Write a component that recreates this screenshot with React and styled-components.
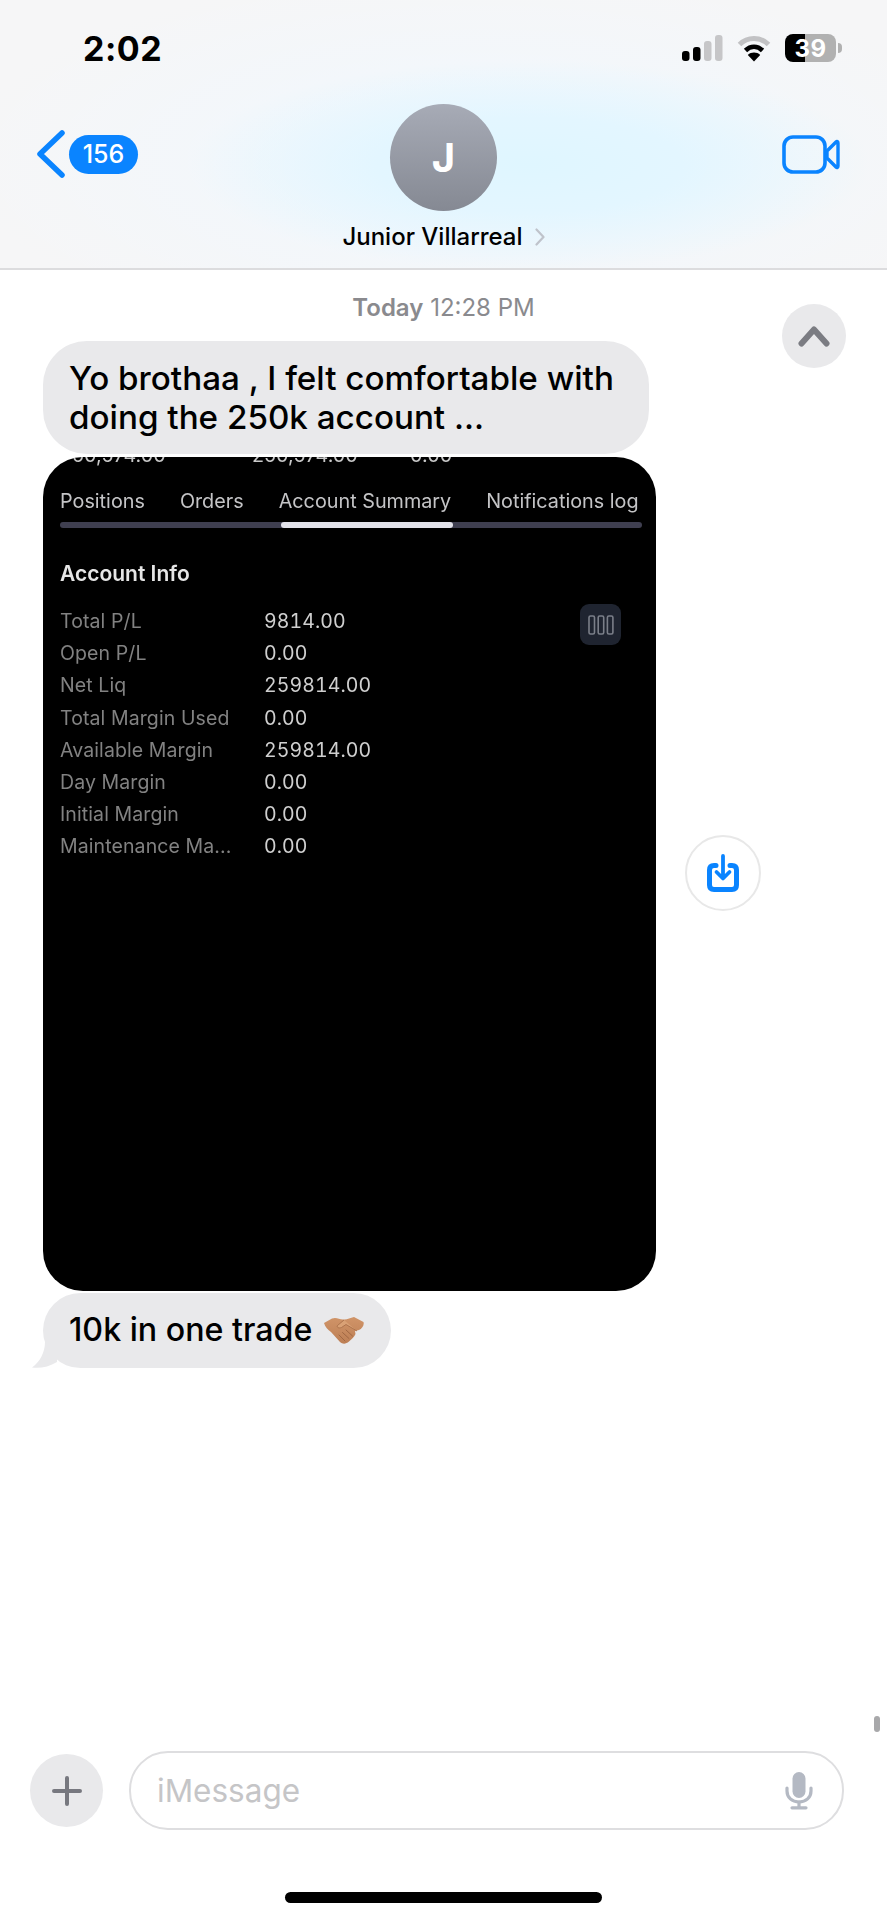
import React from 'react';
import styled, { createGlobalStyle } from 'styled-components';

const GlobalStyle = createGlobalStyle`
  html, body {
    margin: 0;
    padding: 0;
    background: #fff;
  }
  * {
    box-sizing: border-box;
  }
`;

const Page = styled.div`
  position: relative;
  width: 887px;
  height: 1920px;
  overflow: hidden;
  display: flex;
  flex-direction: column;
  background: #fff;
  font-family: Inter, "Liberation Sans", sans-serif;
  color: #000;
`;

const Header = styled.header`
  height: 270px;
  flex: none;
  border-bottom: 2px solid #dcdcde;
  background:
    radial-gradient(ellipse 340px 105px at 530px 165px, #dff6ff 0%, #e3f6ff 45%, rgba(235, 247, 255, 0) 100%),
    radial-gradient(ellipse 520px 190px at 480px 160px, #f0f8ff 0%, rgba(240, 248, 255, 0) 100%),
    #f6f6f7;
`;

const StatusBar = styled.div`
  height: 96px;
  display: flex;
  align-items: center;
  justify-content: space-between;
  padding: 0 51px 0 83px;
`;

const Clock = styled.span`
  font-size: 34px;
  font-weight: 700;
  letter-spacing: 0.5px;
`;

const StatusIcons = styled.div`
  display: flex;
  align-items: center;
  gap: 14px;
`;

const Battery = styled.div`
  position: relative;
  width: 51px;
  height: 28px;
  border-radius: 8px;
  display: flex;
  align-items: center;
  justify-content: center;
  background: linear-gradient(90deg, #000 0, #000 20px, #b1b1b1 20px);
  color: #fff;
  font-size: 24px;
  font-weight: 700;
  letter-spacing: 0.5px;

  &::after {
    content: '';
    position: absolute;
    right: -6px;
    top: 9px;
    width: 4px;
    height: 10px;
    border-radius: 0 4px 4px 0;
    background: #b1b1b1;
  }
`;

const Nav = styled.div`
  display: grid;
  grid-template-columns: 1fr auto 1fr;
  padding: 8px 47px 0;
`;

const BackLink = styled.div`
  display: flex;
  align-items: center;
  gap: 4px;
  height: 100px;
  margin-left: -10px;
`;

const CountBadge = styled.span`
  width: 69px;
  height: 39px;
  border-radius: 20px;
  background: #0a84ff;
  color: #fff;
  font-size: 25px;
  font-weight: 500;
  display: flex;
  align-items: center;
  justify-content: center;
`;

const Contact = styled.div`
  display: flex;
  flex-direction: column;
  align-items: center;
`;

const Avatar = styled.div`
  width: 107px;
  height: 107px;
  border-radius: 50%;
  background: linear-gradient(180deg, #a7abb6 0%, #858993 100%);
  color: #fff;
  font-size: 40px;
  font-weight: 700;
  display: flex;
  align-items: center;
  justify-content: center;
`;

const ContactName = styled.div`
  margin-top: 12px;
  display: flex;
  align-items: center;
  gap: 12px;
  font-size: 24px;
  font-weight: 500;
  line-height: 28px;
`;

const VideoSlot = styled.div`
  display: flex;
  align-items: center;
  justify-content: flex-end;
  height: 100px;
`;

const Thread = styled.main`
  flex: 1;
  padding: 24px 0 0 43px;
`;

const Stamp = styled.div`
  height: 28px;
  margin-left: -43px;
  text-align: center;
  font-size: 24px;
  line-height: 28px;
  color: #8a8a8e;

  b {
    font-weight: 600;
  }
`;

const ScrollUp = styled.div`
  position: absolute;
  left: 782px;
  top: 304px;
  width: 64px;
  height: 64px;
  border-radius: 50%;
  background: #e9e9eb;
  display: flex;
  align-items: center;
  justify-content: center;
`;

const Bubble = styled.div`
  position: relative;
  width: fit-content;
  background: #e9e9eb;
  font-size: ${(p) => p.$size}px;
  font-weight: 500;
  line-height: 38.5px;
  padding: ${(p) => p.$pad};
  border-radius: ${(p) => p.$radius}px;
  margin-top: ${(p) => p.$top}px;
  display: flex;
  align-items: center;
`;

const Tail = styled.svg`
  position: absolute;
  left: -12px;
  bottom: 0;
`;

const AttachmentRow = styled.div`
  display: flex;
  align-items: center;
  margin-top: 3px;
`;

const Shot = styled.div`
  width: 613px;
  height: 834px;
  border-radius: 40px;
  background: #000;
  overflow: hidden;
  padding: 0 17px;
  font-size: 19.8px;
  filter: blur(0.3px);
`;

const CutRow = styled.div`
  display: flex;
  margin: -14px 0 0 12px;
  height: 24px;
  line-height: 24px;
  color: #c9c9c9;
`;

const CutCell = styled.span`
  width: ${(p) => p.$w}px;
`;

const Tabs = styled.div`
  display: flex;
  gap: 35px;
  margin-top: 22px;
  height: 24px;
  line-height: 24px;
  color: #c4c4c6;
  white-space: nowrap;
`;

const Track = styled.div`
  margin-top: 9px;
  height: 6px;
  width: 582px;
  border-radius: 3px;
  background: #3f3f50;
`;

const TrackThumb = styled.div`
  margin-left: 221px;
  width: 172px;
  height: 6px;
  border-radius: 3px;
  background: #e2e2ea;
`;

const InfoTitle = styled.h2`
  margin: 33px 0 0;
  font-size: 21px;
  font-weight: 600;
  line-height: 26px;
  color: #e6e6e6;
`;

const InfoBody = styled.div`
  display: flex;
  justify-content: space-between;
  align-items: flex-start;
  margin-top: 18px;
  padding-right: 18px;
`;

const InfoTable = styled.div`
  display: grid;
  grid-template-columns: 204px auto;
  grid-auto-rows: 32.2px;
  line-height: 32.2px;
`;

const InfoLabel = styled.span`
  color: #828282;
  font-size: 19.5px;
  letter-spacing: 0.1px;
`;

const InfoValue = styled.span`
  color: #cfcfcf;
  font-size: 19.5px;
  letter-spacing: 0.1px;
  font-variant-numeric: tabular-nums;
`;

const ColumnsButton = styled.div`
  width: 41px;
  height: 41px;
  margin-top: -1px;
  border-radius: 9px;
  background: #1f2430;
  display: flex;
  align-items: center;
  justify-content: center;
`;

const SaveButton = styled.div`
  margin: -2px 0 0 29px;
  width: 76px;
  height: 76px;
  border-radius: 50%;
  border: 2px solid #e8e8e8;
  display: flex;
  align-items: center;
  justify-content: center;
`;

const Composer = styled.div`
  display: flex;
  align-items: center;
  gap: 26px;
  padding: 0 43px 0 30px;
`;

const PlusButton = styled.div`
  width: 73px;
  height: 73px;
  border-radius: 50%;
  background: #e9e9eb;
  display: flex;
  align-items: center;
  justify-content: center;
`;

const InputField = styled.div`
  flex: 1;
  height: 79px;
  border-radius: 39px;
  border: 2px solid #dedee0;
  padding: 0 29px 0 26px;
  display: flex;
  align-items: center;
  justify-content: space-between;
  color: #c5c5c7;
  font-size: 31.5px;
`;

const ScrollIndicator = styled.div`
  position: absolute;
  left: 874px;
  top: 1716px;
  width: 6px;
  height: 16px;
  border-radius: 3px;
  background: #a8a8aa;
`;

const HomeBar = styled.div`
  flex: none;
  width: 317px;
  height: 11px;
  margin: 62px auto 17px;
  border-radius: 6px;
  background: #000;
`;

function SignalIcon() {
  return (
    <svg width="41" height="26" viewBox="0 0 41 26">
      <rect x="0" y="16" width="7.5" height="10" rx="3" fill="#000" />
      <rect x="11" y="12" width="7.5" height="14" rx="3" fill="#000" />
      <rect x="22" y="6" width="7.5" height="20" rx="3" fill="#c6c6c8" />
      <rect x="33" y="0" width="7.5" height="26" rx="3" fill="#c6c6c8" />
    </svg>
  );
}

function WifiIcon() {
  return (
    <svg width="34" height="28" viewBox="0 0 34 28">
      <path d="M2.5 10.5C10.5 2.5 23.5 2.5 31.5 10.5" fill="none" stroke="#c2c2c4" strokeWidth="5" />
      <path d="M8.5 16.5C13.5 11.5 20.5 11.5 25.5 16.5" fill="none" stroke="#000" strokeWidth="4.6" />
      <path d="M17 27.5L10.8 21C14.2 17.8 19.8 17.8 23.2 21Z" fill="#000" />
    </svg>
  );
}

function BackChevron() {
  return (
    <svg width="28" height="48" viewBox="0 0 28 48">
      <path d="M25 3L3 24L25 45" fill="none" stroke="#0a84ff" strokeWidth="5.5" strokeLinecap="round" strokeLinejoin="round" />
    </svg>
  );
}

function VideoIcon() {
  return (
    <svg width="58" height="39" viewBox="0 0 58 39">
      <rect x="2" y="2" width="41" height="35" rx="9" fill="none" stroke="#0a84ff" strokeWidth="3.6" />
      <path d="M45 16L54 7C55 6 56 6.5 56 8V31C56 32.5 55 33 54 32L45 23Z" fill="none" stroke="#0a84ff" strokeWidth="3.4" strokeLinejoin="round" />
    </svg>
  );
}

function NameChevron() {
  return (
    <svg width="10" height="18" viewBox="0 0 10 18">
      <path d="M1.5 1.5L8.5 9L1.5 16.5" fill="none" stroke="#bfc3cb" strokeWidth="2.2" strokeLinecap="round" strokeLinejoin="round" />
    </svg>
  );
}

function UpChevron() {
  return (
    <svg width="32" height="22" viewBox="0 0 32 22">
      <path d="M3.5 18.5L16 4.5L28.5 18.5" fill="none" stroke="#7b7c82" strokeWidth="6" strokeLinecap="round" strokeLinejoin="round" />
    </svg>
  );
}

function ColumnsIcon() {
  return (
    <svg width="26" height="20" viewBox="0 0 26 20">
      <rect x="1" y="1" width="5.5" height="18" rx="1.5" fill="none" stroke="#7b7f89" strokeWidth="1.6" />
      <rect x="10.2" y="1" width="5.5" height="18" rx="1.5" fill="none" stroke="#7b7f89" strokeWidth="1.6" />
      <rect x="19.4" y="1" width="5.5" height="18" rx="1.5" fill="none" stroke="#7b7f89" strokeWidth="1.6" />
    </svg>
  );
}

function SaveIcon() {
  return (
    <svg width="32" height="38" viewBox="0 0 32 38">
      <path d="M9 11.5H7C4 11.5 2.5 13 2.5 16V31C2.5 34 4 35.5 7 35.5H25C28 35.5 29.5 34 29.5 31V16C29.5 13 28 11.5 25 11.5H23" fill="none" stroke="#0a84ff" strokeWidth="5" strokeLinecap="round" />
      <path d="M16 2V24M9.5 18L16 24.5L22.5 18" fill="none" stroke="#0a84ff" strokeWidth="3.8" strokeLinecap="round" strokeLinejoin="round" />
    </svg>
  );
}

function HandshakeIcon() {
  return (
    <svg width="40" height="27" viewBox="0 0 40 27" style={{ marginLeft: 12 }}>
      <defs>
        <linearGradient id="skin" x1="0" y1="0" x2="0" y2="1">
          <stop offset="0" stopColor="#d09468" />
          <stop offset="1" stopColor="#bd7f55" />
        </linearGradient>
      </defs>
      <path d="M0 6L8 1.5C12 0 15 2 19 2.5C23 3 26 1 30 0L39.5 5C40.5 8 38 11.5 35 13L31 14L31.5 17C30.5 20 27.5 22 25 24.5C22 27 19 27.5 16 25L7 15C4 13 1 10 0 6Z" fill="url(#skin)" />
      <path d="M20 3L13.5 8.5C12.5 10.5 15 11.5 17.5 10.5L22 7.5L33 14" fill="#d9a175" stroke="#a86f49" strokeWidth="0.9" strokeLinejoin="round" />
      <path d="M15 18L21 24M18.5 15.5L25 21.5M22 13L28.5 19" fill="none" stroke="#a06743" strokeWidth="1" strokeLinecap="round" />
    </svg>
  );
}

function PlusIcon() {
  return (
    <svg width="30" height="30" viewBox="0 0 30 30">
      <path d="M15 2V28M2 15H28" fill="none" stroke="#77787f" strokeWidth="4" strokeLinecap="round" />
    </svg>
  );
}

function MicIcon() {
  return (
    <svg width="28" height="38" viewBox="0 0 28 38">
      <rect x="7.5" y="0" width="13" height="26" rx="6.5" fill="#b4b9c3" />
      <path d="M2 16V19C2 25.5 7 30 14 30C21 30 26 25.5 26 19V16" fill="none" stroke="#b4b9c3" strokeWidth="3.2" strokeLinecap="round" />
      <path d="M14 30V35M7 35.8H21" fill="none" stroke="#b4b9c3" strokeWidth="3.2" strokeLinecap="round" />
    </svg>
  );
}

const accountInfo = [
  ['Total P/L', '9814.00'],
  ['Open P/L', '0.00'],
  ['Net Liq', '259814.00'],
  ['Total Margin Used', '0.00'],
  ['Available Margin', '259814.00'],
  ['Day Margin', '0.00'],
  ['Initial Margin', '0.00'],
  ['Maintenance Ma...', '0.00'],
];

export default function App() {
  return (
    <Page>
      <GlobalStyle />
      <Header>
        <StatusBar>
          <Clock>2:02</Clock>
          <StatusIcons>
            <SignalIcon />
            <WifiIcon />
            <Battery>39</Battery>
          </StatusIcons>
        </StatusBar>
        <Nav>
          <BackLink>
            <BackChevron />
            <CountBadge>156</CountBadge>
          </BackLink>
          <Contact>
            <Avatar>J</Avatar>
            <ContactName>
              Junior Villarreal
              <NameChevron />
            </ContactName>
          </Contact>
          <VideoSlot>
            <VideoIcon />
          </VideoSlot>
        </Nav>
      </Header>

      <Thread>
        <Stamp>
          <b>Today</b> 12:28 PM
        </Stamp>
        <Bubble $size={33.2} $pad="18px 35px 18px 26px" $radius={44} $top={19}>
          Yo brothaa , I felt comfortable with
          <br />
          doing the 250k account ...
        </Bubble>
        <AttachmentRow>
          <Shot>
            <CutRow>
              <CutCell $w={180}>50,574.00</CutCell>
              <CutCell $w={158}>250,574.00</CutCell>
              <CutCell $w={50}>0.00</CutCell>
            </CutRow>
            <Tabs>
              <span>Positions</span>
              <span>Orders</span>
              <span>Account Summary</span>
              <span>Notifications log</span>
            </Tabs>
            <Track>
              <TrackThumb />
            </Track>
            <InfoTitle>Account Info</InfoTitle>
            <InfoBody>
              <InfoTable>
                {accountInfo.map(([label, value]) => (
                  <React.Fragment key={label}>
                    <InfoLabel>{label}</InfoLabel>
                    <InfoValue>{value}</InfoValue>
                  </React.Fragment>
                ))}
              </InfoTable>
              <ColumnsButton>
                <ColumnsIcon />
              </ColumnsButton>
            </InfoBody>
          </Shot>
          <SaveButton>
            <SaveIcon />
          </SaveButton>
        </AttachmentRow>
        <Bubble $size={32.2} $pad="18px 27px 18px 26px" $radius={38} $top={2}>
          10k in one trade
          <HandshakeIcon />
          <Tail width="26" height="26" viewBox="0 0 26 26">
            <path d="M14 0C14 10 9 20 1 25.5C9 26.5 18 25 26 20V0Z" fill="#e9e9eb" />
          </Tail>
        </Bubble>
      </Thread>

      <ScrollUp>
        <UpChevron />
      </ScrollUp>
      <ScrollIndicator />

      <Composer>
        <PlusButton>
          <PlusIcon />
        </PlusButton>
        <InputField>
          iMessage
          <MicIcon />
        </InputField>
      </Composer>
      <HomeBar />
    </Page>
  );
}
